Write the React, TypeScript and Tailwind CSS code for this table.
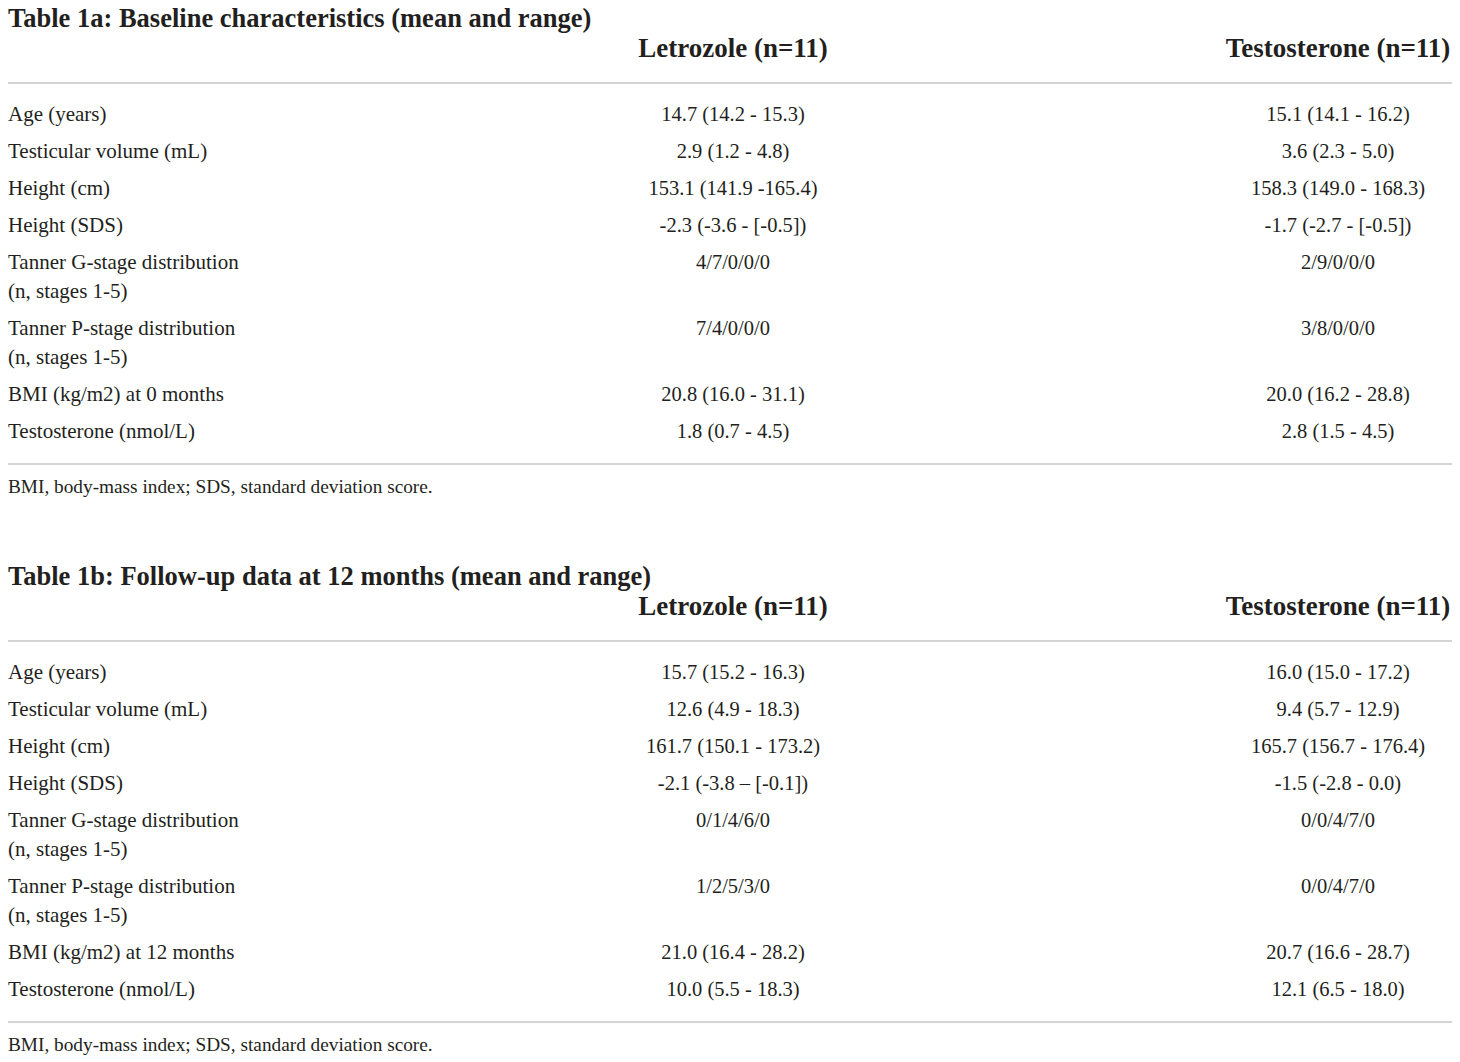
const tables = [
  {
    title: "Table 1a: Baseline characteristics (mean and range)",
    rows: [
      ["Age (years)", "14.7 (14.2 - 15.3)", "15.1 (14.1 - 16.2)"],
      ["Testicular volume (mL)", "2.9 (1.2 - 4.8)", "3.6 (2.3 - 5.0)"],
      ["Height (cm)", "153.1 (141.9 -165.4)", "158.3 (149.0 - 168.3)"],
      ["Height (SDS)", "-2.3 (-3.6 - [-0.5])", "-1.7 (-2.7 - [-0.5])"],
      ["Tanner G-stage distribution\n(n, stages 1-5)", "4/7/0/0/0", "2/9/0/0/0"],
      ["Tanner P-stage distribution\n(n, stages 1-5)", "7/4/0/0/0", "3/8/0/0/0"],
      ["BMI (kg/m2) at 0 months", "20.8 (16.0 - 31.1)", "20.0 (16.2 - 28.8)"],
      ["Testosterone (nmol/L)", "1.8 (0.7 - 4.5)", "2.8 (1.5 - 4.5)"],
    ],
  },
  {
    title: "Table 1b: Follow-up data at 12 months (mean and range)",
    rows: [
      ["Age (years)", "15.7 (15.2 - 16.3)", "16.0 (15.0 - 17.2)"],
      ["Testicular volume (mL)", "12.6 (4.9 - 18.3)", "9.4 (5.7 - 12.9)"],
      ["Height (cm)", "161.7 (150.1 - 173.2)", "165.7 (156.7 - 176.4)"],
      ["Height (SDS)", "-2.1 (-3.8 \u2013 [-0.1])", "-1.5 (-2.8 - 0.0)"],
      ["Tanner G-stage distribution\n(n, stages 1-5)", "0/1/4/6/0", "0/0/4/7/0"],
      ["Tanner P-stage distribution\n(n, stages 1-5)", "1/2/5/3/0", "0/0/4/7/0"],
      ["BMI (kg/m2) at 12 months", "21.0 (16.4 - 28.2)", "20.7 (16.6 - 28.7)"],
      ["Testosterone (nmol/L)", "10.0 (5.5 - 18.3)", "12.1 (6.5 - 18.0)"],
    ],
  },
];

function DataTable({ title, rows }: { title: string; rows: string[][] }) {
  return (
    <section>
      <h2 className="text-[26.5px] font-bold leading-[30px] pt-[3px] whitespace-nowrap">{title}</h2>
      <table className="w-full border-collapse">
        <colgroup>
          <col className="w-[234px]" />
          <col />
          <col className="w-[228px]" />
        </colgroup>
        <thead>
          <tr className="border-b-2 border-[#d4d4d4]">
            <th />
            <th className="text-[27px] font-bold leading-[30px] pb-[19px] text-center">Letrozole (n=11)</th>
            <th className="text-[27px] font-bold leading-[30px] pb-[19px] text-center whitespace-nowrap">
              Testosterone (n=11)
            </th>
          </tr>
        </thead>
        <tbody className="border-b-2 border-[#d4d4d4]">
          {rows.map((r, i) => (
            <tr key={i}>
              <td
                className={`text-[21px] leading-[29px] py-1 whitespace-pre align-top ${
                  i === 0 ? "pt-[16px]" : ""
                } ${i === rows.length - 1 ? "pb-[17px]" : ""}`}
              >
                {r[0]}
              </td>
              {[r[1], r[2]].map((v, j) => (
                <td
                  key={j}
                  className={`text-[20.5px] leading-[29px] py-1 text-center align-top whitespace-nowrap ${
                    i === 0 ? "pt-[16px]" : ""
                  } ${i === rows.length - 1 ? "pb-[17px]" : ""}`}
                >
                  {v}
                </td>
              ))}
            </tr>
          ))}
        </tbody>
      </table>
      <p className="text-[19.3px] leading-[28px] pt-[8px]">
        BMI, body-mass index; SDS, standard deviation score.
      </p>
    </section>
  );
}

export default function App() {
  return (
    <div className="w-[1460px] h-[1062px] bg-white px-2 text-[#231f20] font-['Liberation_Serif',serif]">
      <DataTable {...tables[0]} />
      <div className="h-[57px]" />
      <DataTable {...tables[1]} />
    </div>
  );
}
